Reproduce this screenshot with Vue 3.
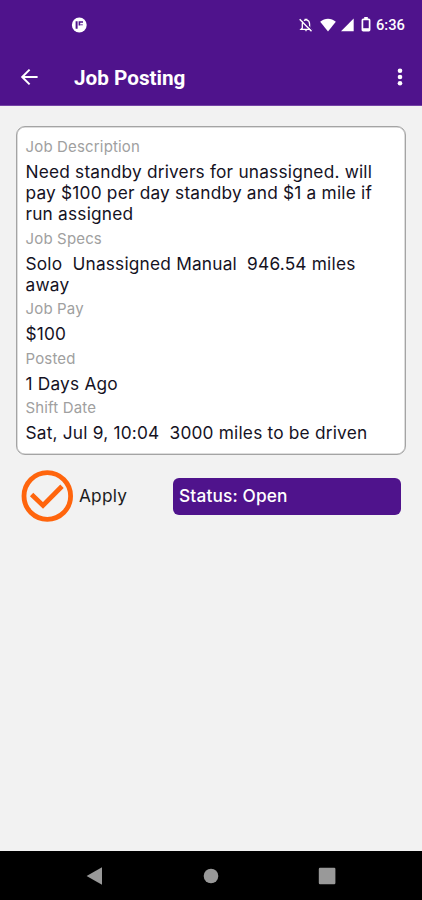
<script setup>
const fields = [
  { label: 'Job Description', lines: ['Need standby drivers for unassigned. will', 'pay $100 per day standby and $1 a mile if', 'run assigned'] },
  { label: 'Job Specs', lines: ['Solo  Unassigned Manual  946.54 miles', 'away'] },
  { label: 'Job Pay', lines: ['$100'] },
  { label: 'Posted', lines: ['1 Days Ago'] },
  { label: 'Shift Date', lines: ['Sat, Jul 9, 10:04  3000 miles to be driven'] },
]
</script>

<template>
  <div class="screen">
    <div class="status-bar">
      <svg class="app-icon" width="16" height="16" viewBox="0 0 16 16">
        <circle cx="8.3" cy="8" r="7.4" fill="#fff" />
        <path d="M4.6 4.3h2v7.4h-2zM7.6 4.3h4.4v1.5H9.2v2.6H7.6z" fill="#4f138c" />
        <path d="M9.2 7h2.6v1.4H9.2z" fill="#4f138c" opacity=".6" />
      </svg>
      <div class="indicators">
        <svg class="bell" width="14" height="16" viewBox="0 0 14 16">
          <path d="M3.3 11V7.2C3.3 5 4.5 3.6 6.2 3.2V2.4h1.6v.8c1.7.4 2.8 1.8 2.8 4V11l1.4 1.3H2z" fill="none" stroke="#fff" stroke-width="1.3" />
          <path d="M5.6 13.2h2.8L7 14.6z" fill="#fff" />
          <path d="M2 1.6l11.5 12" stroke="#4f138c" stroke-width="1.4" />
          <path d="M.7 2.2l11.8 12" stroke="#fff" stroke-width="1.4" />
        </svg>
        <svg class="wifi" width="16" height="14" viewBox="0 0 16 14">
          <path d="M8 13.5L.2 3.7C4.8-.3 11.2-.3 15.8 3.7z" fill="#fff" />
        </svg>
        <svg class="signal" width="13" height="14" viewBox="0 0 13 14">
          <path d="M0 13.2L12.7.6v12.6z" fill="#fff" />
        </svg>
        <svg class="battery" width="10" height="15" viewBox="0 0 10 15">
          <path d="M3.2 1h3.6" stroke="#fff" stroke-width="2" />
          <rect x="1.4" y="2.4" width="7.2" height="11.2" rx=".8" fill="none" stroke="#fff" stroke-width="1.7" />
          <path d="M2 11.2h6v2H2z" fill="#fff" />
        </svg>
        <span class="clock">6:36</span>
      </div>
    </div>
    <header class="app-bar">
      <svg class="back" width="18" height="18" viewBox="0 0 18 18">
        <path d="M17.6 9H2.4M9.6 1.6L2.2 9l7.4 7.4" fill="none" stroke="#fff" stroke-width="2" />
      </svg>
      <h1>Job Posting</h1>
      <svg class="more" width="6" height="18" viewBox="0 0 6 18">
        <circle cx="3" cy="2.8" r="2.3" fill="#fff" />
        <circle cx="3" cy="9" r="2.3" fill="#fff" />
        <circle cx="3" cy="15.2" r="2.3" fill="#fff" />
      </svg>
    </header>
    <main>
      <section class="card">
        <div v-for="field in fields" :key="field.label" class="field">
          <div class="label">{{ field.label }}</div>
          <div v-for="line in field.lines" :key="line" class="value">{{ line }}</div>
        </div>
      </section>
      <div class="actions">
        <button class="apply">
          <svg width="52" height="52" viewBox="0 0 52 52">
            <circle cx="26.3" cy="26" r="23.3" fill="none" stroke="#ff650d" stroke-width="4.8" />
            <path d="M10.6 24.5L22 35.4 41 16.3" fill="none" stroke="#ff650d" stroke-width="4.8" />
          </svg>
          <span>Apply</span>
        </button>
        <div class="status">Status: Open</div>
      </div>
    </main>
    <nav class="nav-bar">
      <svg width="16" height="18" viewBox="0 0 16 18"><path d="M.6 9L16 .3v17.4z" fill="#999" /></svg>
      <svg class="home" width="16" height="16" viewBox="0 0 16 16"><circle cx="8" cy="8" r="7.3" fill="#999" /></svg>
      <svg width="18" height="18" viewBox="0 0 18 18"><rect x=".8" y=".7" width="16.6" height="16.6" rx="1.2" fill="#999" /></svg>
    </nav>
  </div>
</template>

<style>
body { margin: 0; background: #f2f2f2; }
</style>

<style scoped>
.screen {
  width: 422px;
  height: 900px;
  display: flex;
  flex-direction: column;
  overflow: hidden;
  background: #f2f2f2;
  font-family: Inter, "Liberation Sans", sans-serif;
}
.status-bar {
  height: 49px;
  box-sizing: border-box;
  flex: none;
  display: flex;
  justify-content: space-between;
  align-items: center;
  padding: 0 17px 0 71px;
  background: #4f138c;
}
.indicators { display: flex; align-items: center; }
.bell { margin-right: 7px; }
.wifi { margin-right: 5px; }
.signal { margin-right: 7px; }
.battery { margin-right: 5px; }
.clock {
  width: 29px;
  font: 500 14.7px/20px Roboto, sans-serif;
  color: #fff;
  white-space: nowrap;
}
.app-bar {
  height: 57px;
  box-sizing: border-box;
  flex: none;
  display: flex;
  align-items: center;
  padding: 0 19px 0 20px;
  background: #4f138c;
  border-bottom: 1px solid #7443a5;
}
h1 {
  margin: 0 auto 0 36px;
  padding-top: 1px;
  font: 700 20.7px/28px Roboto, sans-serif;
  color: #fff;
}
main { flex: 1; padding: 20px 16px 0; }
.card {
  height: 329px;
  box-sizing: border-box;
  padding: 9.5px 8.5px 0;
  border: 1px solid #a4a4a4;
  box-shadow: inset 0 0 0 0.5px #bbb;
  border-radius: 9px;
  background: #fff;
}
.field { margin-bottom: 4.4px; }
.label {
  height: 20px;
  margin-bottom: 4px;
  font-size: 15px;
  line-height: 20px;
  letter-spacing: 0.16px;
  color: #a0a0a0;
}
.value {
  font-size: 17.3px;
  line-height: 21.2px;
  letter-spacing: 0.2px;
  color: #15121f;
  white-space: pre;
}
.actions { display: flex; align-items: center; padding: 15px 5px 0; }
.apply {
  width: 152px;
  display: flex;
  align-items: center;
  gap: 6px;
  padding: 0;
  border: 0;
  background: none;
  font: 400 17.3px/22px Inter, sans-serif;
  letter-spacing: 0.2px;
  color: #1c1c1c;
}
.status {
  width: 228px;
  height: 37px;
  box-sizing: border-box;
  padding-left: 6px;
  border-radius: 6px;
  background: #4f138c;
  font-size: 17.3px;
  font-weight: 500;
  letter-spacing: 0.15px;
  line-height: 36px;
  color: #fff;
}
.nav-bar {
  height: 49px;
  flex: none;
  display: flex;
  align-items: center;
  justify-content: space-between;
  box-sizing: border-box;
  padding: 0 86px;
  background: #000;
}
.home { margin-left: 2px; }
</style>
